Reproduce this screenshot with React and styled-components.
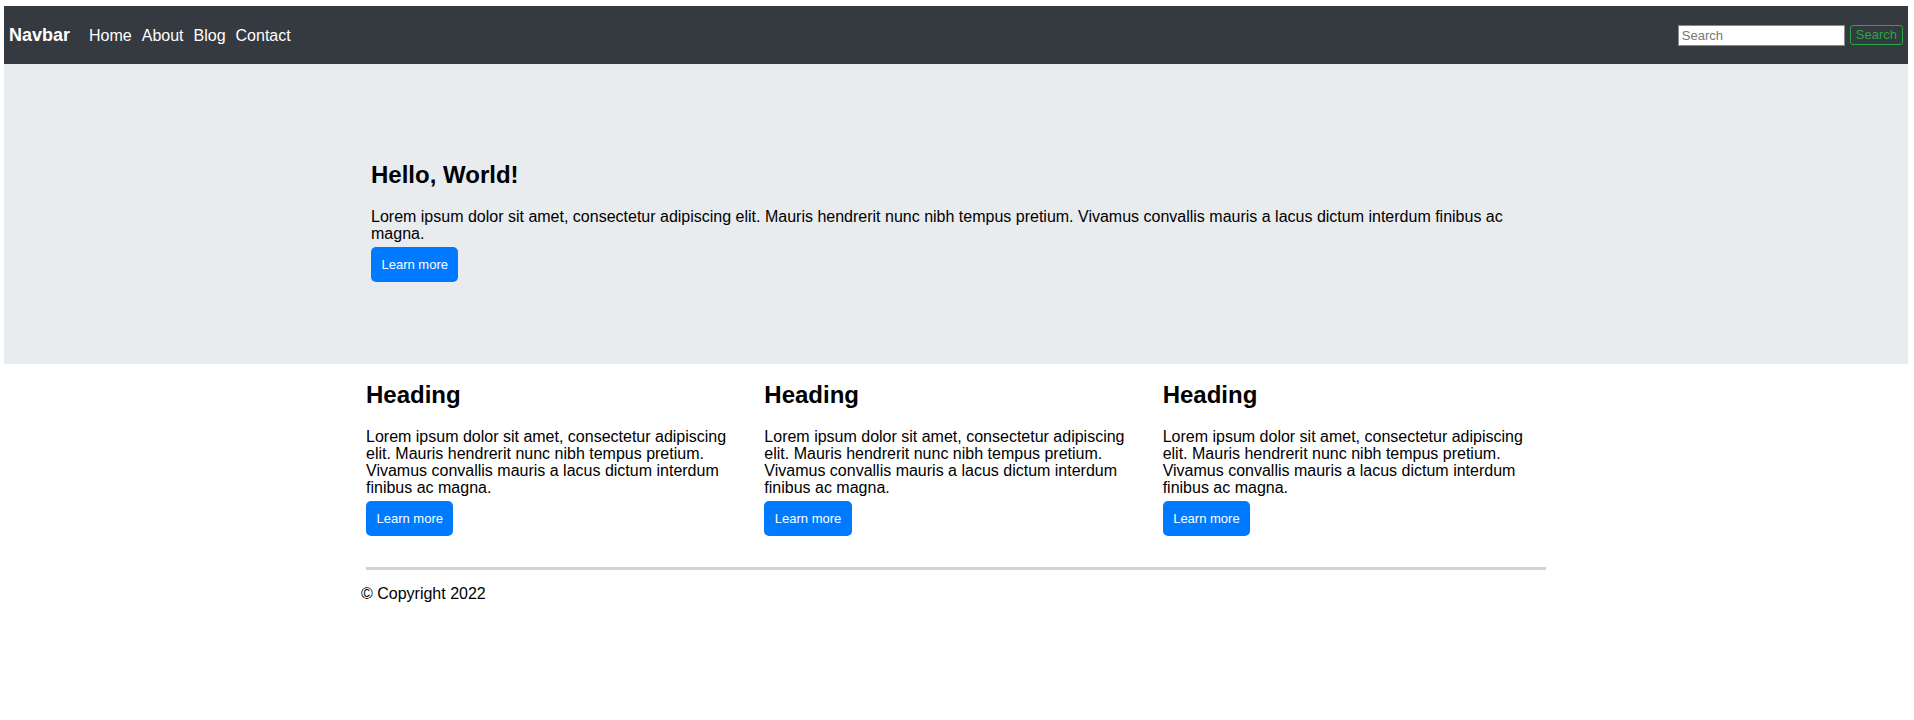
import React from 'react';
import styled, { createGlobalStyle } from 'styled-components';

const GlobalStyle = createGlobalStyle`
	body {
		margin: 6px 6px 0 4px;
		font-family: "Liberation Sans", Helvetica, Arial, sans-serif;
		color: #000;
		background: #fff;
	}
`;

const Nav = styled.nav`
	display: flex;
	align-items: center;
	justify-content: space-between;
	height: 58px;
	padding: 0 5px;
	background: #343a40;
`;

const Left = styled.div`
	display: flex;
	align-items: baseline;
`;

const Brand = styled.a`
	font-size: 18px;
	font-weight: bold;
	color: #fff;
	text-decoration: none;
	margin-right: 19px;
`;

const Links = styled.div`
	display: flex;
	gap: 10px;
`;

const NavLink = styled.a`
	font-size: 16px;
	color: #fff;
	text-decoration: none;
	cursor: pointer;
`;

const SearchForm = styled.form`
	display: flex;
	align-items: center;
	gap: 5px;
`;

const SearchInput = styled.input`
	box-sizing: border-box;
	width: 167px;
	height: 21px;
	padding: 0 3px;
	border: 1px solid #8a8a8a;
	font-family: inherit;
	font-size: 13px;
	background: #fff;
	&::placeholder {
		color: #777;
	}
`;

const OutlineButton = styled.button`
	box-sizing: border-box;
	height: 20px;
	padding: 0 5px;
	border: 1px solid #28a745;
	border-radius: 3px;
	background: transparent;
	color: #28a745;
	font-family: inherit;
	font-size: 13px;
	line-height: 16px;
	cursor: pointer;
`;

const Hero = styled.section`
	background: #e9ecef;
	padding: 78px 0 82px;
`;

const Container = styled.div`
	width: 1180px;
	margin: 0 auto;
`;

const HeroInner = styled.div`
	padding: 0 5px;
`;

const Title = styled.h2`
	font-size: 24px;
	font-weight: bold;
	line-height: 26px;
	margin: ${(props) => (props.$tight ? '18px 0 20px' : '20px 0')};
`;

const Text = styled.p`
	font-size: 16px;
	line-height: 17px;
	margin: 0 0 5px;
`;

const Button = styled.button`
	padding: 10px 10.5px;
	border: none;
	border-radius: 5px;
	background: #007bff;
	color: #fff;
	font-family: inherit;
	font-size: 13px;
	line-height: 15px;
	cursor: pointer;
`;

const Columns = styled.div`
	display: grid;
	grid-template-columns: repeat(3, 1fr);
	gap: 15px;
`;

const Column = styled.div``;

const Divider = styled.hr`
	border: none;
	height: 3px;
	background: #d3d3d3;
	margin: 31px 0 15px;
`;

const Copyright = styled.footer`
	font-size: 16px;
	line-height: 17px;
	margin-left: -5px;
`;

const lorem =
	'Lorem ipsum dolor sit amet, consectetur adipiscing elit. Mauris hendrerit nunc nibh tempus pretium. Vivamus convallis mauris a lacus dictum interdum finibus ac magna.';

export default function App() {
	return (
		<>
			<GlobalStyle />
			<Nav>
				<Left>
					<Brand>Navbar</Brand>
					<Links>
						{['Home', 'About', 'Blog', 'Contact'].map((l) => (
							<NavLink key={l}>{l}</NavLink>
						))}
					</Links>
				</Left>
				<SearchForm onSubmit={(e) => e.preventDefault()}>
					<SearchInput placeholder="Search" />
					<OutlineButton>Search</OutlineButton>
				</SearchForm>
			</Nav>
			<Hero>
				<Container>
					<HeroInner>
						<Title>Hello, World!</Title>
						<Text>{lorem}</Text>
						<Button>Learn more</Button>
					</HeroInner>
				</Container>
			</Hero>
			<Container>
				<Columns>
					{[1, 2, 3].map((i) => (
						<Column key={i}>
							<Title $tight>Heading</Title>
							<Text>{lorem}</Text>
							<Button>Learn more</Button>
						</Column>
					))}
				</Columns>
				<Divider />
				<Copyright>© Copyright 2022</Copyright>
			</Container>
		</>
	);
}
